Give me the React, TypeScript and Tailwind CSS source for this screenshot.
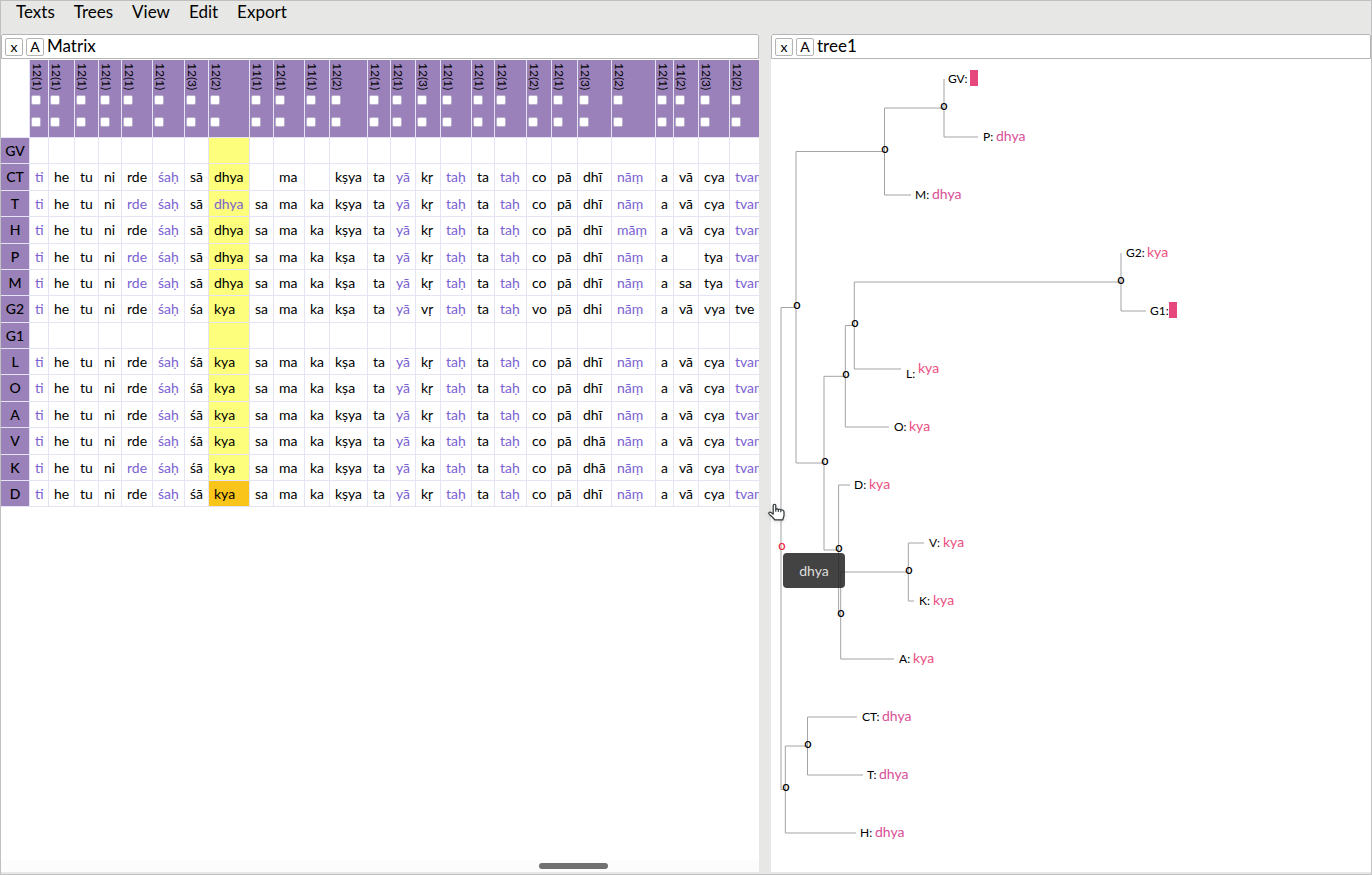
import React from "react";

const menus = ["Texts", "Trees", "View", "Edit", "Export"];

type Column = { id: string; width: string };

const columns: Column[] = [
  { id: "12(1)", width: "w-[19px]" },
  { id: "12(1)", width: "w-[26px]" },
  { id: "12(1)", width: "w-[24px]" },
  { id: "12(1)", width: "w-[23px]" },
  { id: "12(1)", width: "w-[31px]" },
  { id: "12(1)", width: "w-[32px]" },
  { id: "12(3)", width: "w-[24px]" },
  { id: "12(2)", width: "w-[41px]" },
  { id: "11(1)", width: "w-[24px]" },
  { id: "12(1)", width: "w-[31px]" },
  { id: "11(1)", width: "w-[25px]" },
  { id: "12(2)", width: "w-[38px]" },
  { id: "12(1)", width: "w-[23px]" },
  { id: "12(1)", width: "w-[25px]" },
  { id: "12(3)", width: "w-[25px]" },
  { id: "12(1)", width: "w-[31px]" },
  { id: "12(1)", width: "w-[23px]" },
  { id: "12(1)", width: "w-[32px]" },
  { id: "12(2)", width: "w-[25px]" },
  { id: "12(1)", width: "w-[26px]" },
  { id: "12(3)", width: "w-[34px]" },
  { id: "12(2)", width: "w-[44px]" },
  { id: "12(1)", width: "w-[18px]" },
  { id: "11(2)", width: "w-[25px]" },
  { id: "12(3)", width: "w-[31px]" },
  { id: "12(2)", width: "w-[44px]" },
];

const SELECTED = 7;

// "*" marks a variant reading, "-" an empty cell.
const rows: { name: string; tall?: boolean; cells: string }[] = [
  { name: "GV", cells: "" },
  { name: "CT", tall: true, cells: "*ti he tu ni rde *śaḥ sā dhya - ma - kṣya ta *yā kṛ *taḥ ta *taḥ co pā dhī *nāṃ a vā cya *tvaṃ" },
  { name: "T", cells: "*ti he tu ni *rde *śaḥ sā *dhya sa ma ka kṣya ta *yā kṛ *taḥ ta *taḥ co pā dhī *nāṃ a vā cya *tvaṃ" },
  { name: "H", tall: true, cells: "*ti he tu ni rde *śaḥ sā dhya sa ma ka kṣya ta *yā kṛ *taḥ ta *taḥ co pā dhī *māṃ a vā cya *tvaṃ" },
  { name: "P", cells: "*ti he tu ni *rde *śaḥ sā dhya sa ma ka kṣa ta *yā kṛ *taḥ ta *taḥ co pā dhī *nāṃ a - tya *tvaṃ" },
  { name: "M", cells: "*ti he tu ni *rde *śaḥ sā dhya sa ma ka kṣa ta *yā kṛ *taḥ ta *taḥ co pā dhī *nāṃ a sa tya *tvaṃ" },
  { name: "G2", tall: true, cells: "*ti he tu ni rde *śaḥ śa kya sa ma ka kṣa ta *yā vṛ *taḥ ta *taḥ vo pā dhi *nāṃ a vā vya tve" },
  { name: "G1", cells: "" },
  { name: "L", cells: "*ti he tu ni rde *śaḥ śā kya sa ma ka kṣa ta *yā kṛ *taḥ ta *taḥ co pā dhī *nāṃ a vā cya *tvaṃ" },
  { name: "O", tall: true, cells: "*ti he tu ni rde *śaḥ śā kya sa ma ka kṣa ta *yā kṛ *taḥ ta *taḥ co pā dhī *nāṃ a vā cya *tvaṃ" },
  { name: "A", cells: "*ti he tu ni rde *śaḥ śā kya sa ma ka kṣya ta *yā kṛ *taḥ ta *taḥ co pā dhī *nāṃ a vā cya *tvaṃ" },
  { name: "V", tall: true, cells: "*ti he tu ni rde *śaḥ śā kya sa ma ka kṣya ta *yā ka *taḥ ta *taḥ co pā dhā *nāṃ a vā cya *tvaṃ" },
  { name: "K", cells: "*ti he tu ni *rde *śaḥ śā kya sa ma ka kṣya ta *yā ka *taḥ ta *taḥ co pā dhā *nāṃ a vā cya *tvaṃ" },
  { name: "D", cells: "*ti he tu ni rde *śaḥ śā kya sa ma ka kṣya ta *yā kṛ *taḥ ta *taḥ co pā dhī *nāṃ a vā cya *tvaṃ" },
];

function TitleBar({ title }: { title: string }) {
  const button =
    "flex size-[18px] items-center justify-center rounded-xs border border-[#b4b4b4] bg-white text-sm leading-none";
  return (
    <header className="flex h-[25px] shrink-0 items-center gap-[3px] rounded-t-xs border border-[#b5b5b5] bg-white pl-[3px]">
      <button type="button" aria-label={`Close ${title}`} className={button}>x</button>
      <button type="button" aria-label={`Script of ${title}`} className={button}>A</button>
      <h2 className="pb-0.5 text-[17px] leading-none">{title}</h2>
    </header>
  );
}

function Tick({ label }: { label: string }) {
  return (
    <input
      type="checkbox"
      aria-label={label}
      className="m-0 block size-[10px] appearance-none rounded-xs border border-[#b9aecb] bg-white checked:bg-[#6f5a90]"
    />
  );
}

function Matrix() {
  return (
    <table className="w-[773px] table-fixed border-separate border-spacing-0">
      <thead>
        <tr className="h-[78px]">
          <td className="w-[29px] border-r border-b border-[#e4e4f5] bg-white p-0" />
          {columns.map((c, i) => (
            <th
              key={i}
              scope="col"
              className={`${c.width} border-r border-b border-[#e4e4f5] bg-[#9b81ba] p-0 text-left align-top font-normal`}
            >
              <div className="flex flex-col items-start pt-[3px] pl-px">
                <span className="h-8 text-xs leading-[13px] [writing-mode:vertical-rl]">{c.id}</span>
                <Tick label={`Mark column ${i + 1}`} />
                <span className="h-3" />
                <Tick label={`Hide column ${i + 1}`} />
              </div>
            </th>
          ))}
        </tr>
      </thead>
      <tbody>
        {rows.map((r) => {
          const cells = r.cells ? r.cells.split(" ") : columns.map(() => "-");
          return (
            <tr key={r.name} className={r.tall ? "h-[27px]" : "h-[26px]"}>
              <th
                scope="row"
                className="border-r border-b border-[#e4e4f5] bg-[#9b81ba] p-0 text-center text-sm leading-5 font-medium"
              >
                {r.name}
              </th>
              {cells.map((c, i) => {
                const variant = c.startsWith("*");
                const fill =
                  i !== SELECTED ? "bg-white" : r.name === "D" ? "bg-[#f9c51a]" : "bg-[#fdff7c]";
                return (
                  <td
                    key={i}
                    className={`border-r border-b border-[#e4e4f5] p-0 pl-[5px] text-sm leading-5 whitespace-nowrap ${fill} ${
                      variant ? "text-[#7b62d2]" : "text-black"
                    }`}
                  >
                    {c === "-" ? "" : c.replace("*", "")}
                  </td>
                );
              })}
            </tr>
          );
        })}
      </tbody>
    </table>
  );
}

const branches = [
  "M944 79V137H978",
  "M944 108H884.5V195H911",
  "M884.5 151.5H796V463H824",
  "M796 307.5H781V789.5H785",
  "M845 376.3H824V550H838.5",
  "M854 325.5H845.3V427H889",
  "M1121 282H854.3V369H901",
  "M1121 253V311H1146",
  "M850 485H838.6V615H841",
  "M908 572H840.7V659H894",
  "M924 543H908.3V601H914",
  "M807 746H785.3V833H856",
  "M857 717H807.5V775H863",
];

const nodes = [
  [944, 107], [885, 150], [797, 306], [1121, 281], [855, 324], [846, 375], [825, 462],
  [839, 549], [909, 571], [841, 614], [808, 745], [786, 788],
];

type Leaf = { name: string; x: number; y: number; vx: number; vy: number; value?: string };

const leaves: Leaf[] = [
  { name: "GV", x: 948, y: 83, vx: 970, vy: 83 },
  { name: "P", x: 983, y: 141, vx: 996, vy: 141, value: "dhya" },
  { name: "M", x: 915, y: 199, vx: 932, vy: 199, value: "dhya" },
  { name: "G2", x: 1126, y: 257, vx: 1147, vy: 257, value: "kya" },
  { name: "G1", x: 1150, y: 315, vx: 1169, vy: 315 },
  { name: "L", x: 906, y: 378, vx: 918, vy: 373, value: "kya" },
  { name: "O", x: 894, y: 431, vx: 909, vy: 431, value: "kya" },
  { name: "D", x: 854, y: 489, vx: 869, vy: 489, value: "kya" },
  { name: "V", x: 929, y: 547, vx: 943, vy: 547, value: "kya" },
  { name: "K", x: 919, y: 605, vx: 933, vy: 605, value: "kya" },
  { name: "A", x: 899, y: 663, vx: 913, vy: 663, value: "kya" },
  { name: "CT", x: 862, y: 721, vx: 882, vy: 721, value: "dhya" },
  { name: "T", x: 867, y: 779, vx: 879, vy: 779, value: "dhya" },
  { name: "H", x: 860, y: 837, vx: 875, vy: 837, value: "dhya" },
];

function Tree() {
  return (
    <div className="relative min-h-0 grow">
      <svg viewBox="771 59 600 813" width="600" height="813" className="block" role="img" aria-label="tree1">
        <g fill="none" stroke="#a3a3a8" strokeWidth="1">
          {branches.map((d) => (
            <path key={d} d={d} />
          ))}
        </g>
        <g className="text-[13px] font-medium" textAnchor="middle">
          {nodes.map(([x, y]) => (
            <text key={`${x}-${y}`} x={x} y={y + 3}>o</text>
          ))}
          <text x="782" y="550" fill="#f0243f">o</text>
        </g>
        {leaves.map((l) => (
          <g key={l.name}>
            <text x={l.x} y={l.y} className="text-xs">{l.name}:</text>
            {l.value ? (
              <text x={l.vx} y={l.vy} className="text-sm" fill={l.value === "kya" ? "#ea4f80" : "#d94f97"}>
                {l.value}
              </text>
            ) : (
              <rect x={l.vx} y={l.vy - 13} width="8" height="16" fill="#e6487d" />
            )}
          </g>
        ))}
      </svg>
      <div
        role="tooltip"
        className="absolute top-[494px] left-3 flex h-[35px] w-[62px] items-center justify-center rounded bg-[#222222]/85 text-sm text-[#dddddd]"
      >
        dhya
      </div>
      <svg
        viewBox="0 0 18 19"
        aria-hidden="true"
        className="absolute top-[444px] -left-[3px] h-[19px] w-[18px] drop-shadow-sm"
      >
        <path
          d="M5.2 11.2V2.6c0-1.8 2.6-1.8 2.6 0v3.8c.5-.8 2.1-.8 2.5.3.6-.7 2.1-.6 2.5.5.8-.7 3.2-.4 3.2 1.8v3.2c0 1.8-.9 2.4-1.2 4.6H6.6c-.3-1.3-1.6-2.1-2.6-3.1-1-1-2.2-1.800-2.900-2.700-.9-1.400.6-2.400 1.900-1.600z"
          fill="white"
          stroke="#2e3436"
          strokeWidth="1.2"
          strokeLinejoin="round"
        />
        <path d="M7.8 6.2v2.600M10.300 6.800v2.200M12.800 7.400v1.900" stroke="#2e3436" strokeWidth="1.1" />
      </svg>
    </div>
  );
}

export default function App() {
  return (
    <div className="flex h-screen flex-col border border-[#c0c0c0] bg-[#e7e7e5] pb-0.5 font-[Lato,'Noto_Sans',sans-serif] text-black">
      <nav className="flex h-[33px] shrink-0 gap-[19px] pl-[15px]">
        {menus.map((m) => (
          <button key={m} type="button" className="h-[22px] text-[17px] leading-[22px]">{m}</button>
        ))}
      </nav>
      <main className="flex min-h-0 grow gap-3">
        <section className="flex min-w-0 flex-[758] flex-col overflow-hidden bg-white">
          <TitleBar title="Matrix" />
          <div className="min-h-0 grow overflow-hidden pt-px">
            <Matrix />
          </div>
          <div className="flex h-3 shrink-0 items-center bg-[#fcfcfc] pl-[71%]">
            <div className="h-1.5 w-[69px] rounded-full bg-[#707070]" />
          </div>
        </section>
        <section className="flex min-w-0 flex-[600] flex-col bg-white">
          <TitleBar title="tree1" />
          <Tree />
        </section>
      </main>
    </div>
  );
}
